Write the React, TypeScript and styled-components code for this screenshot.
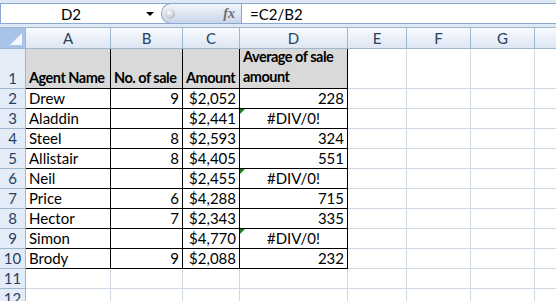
import styled, { createGlobalStyle } from "styled-components";

const GlobalStyle = createGlobalStyle`
    body {
        margin: 0;
        background: #ffffff;
        font-family: Lato, "Liberation Sans", sans-serif;
        overflow: hidden;
    }
`;

const Window = styled.div`
    width: 556px;
    height: 301px;
    overflow: hidden;
    background: #ffffff;
`;

const FormulaStrip = styled.div`
    background: #dfe8f5;
    padding-top: 3px;
    padding-bottom: 3px;
    border-bottom: 1px solid #9eb6ce;
`;

const FormulaBar = styled.div`
    display: flex;
    height: 19px;
    border: 1px solid #8ba8cf;
    border-right: none;
    background: #ffffff;
`;

const NameBox = styled.div`
    width: 160px;
    display: flex;
    align-items: center;
    font-size: 15px;
    color: #000;
`;

const NameText = styled.span`
    width: 140px;
    text-align: center;
`;

const DropArrow = styled.span`
    width: 0;
    height: 0;
    border-left: 4px solid transparent;
    border-right: 4px solid transparent;
    border-top: 4px solid #000;
    margin-left: 5px;
`;

const FxButton = styled.div`
    width: 80px;
    display: flex;
    align-items: center;
    justify-content: space-between;
    padding: 0 6px 0 3px;
    box-sizing: border-box;
    border-radius: 10px 0 0 10px;
    border: 1px solid #8ba8cf;
    border-right: none;
    margin: -1px 0;
    background: linear-gradient(#f3f6fb, #dbe4f2 55%, #c9d6ea);
`;

const Knob = styled.span`
    width: 10px;
    height: 10px;
    border-radius: 50%;
    background: radial-gradient(circle at 40% 35%, #ffffff, #c5c9cf 60%, #9aa1aa);
`;

const FxLabel = styled.span`
    font-family: "Liberation Serif", serif;
    font-style: italic;
    font-weight: bold;
    font-size: 14px;
    color: #6e6e6e;
`;

const FormulaInput = styled.div`
    flex: 1;
    border-left: 1px solid #8ba8cf;
    padding-left: 8px;
    display: flex;
    align-items: center;
    font-size: 15px;
    color: #000;
`;

const Grid = styled.div`
    display: grid;
    grid-template-columns: 26px 85px 72px 57px 108px 59px 64px 64px 64px;
    grid-template-rows: 21px 40px repeat(11, 20px);
`;

const Corner = styled.div`
    position: relative;
    background: #a9c4e9;
    border-right: 1px solid #9eb6ce;
    border-bottom: 1px solid #9eb6ce;
    &::after {
        content: "";
        position: absolute;
        right: 3px;
        bottom: 3px;
        width: 0;
        height: 0;
        border-left: 12px solid transparent;
        border-bottom: 12px solid #f4f7fb;
    }
`;

const ColHead = styled.div`
    display: flex;
    align-items: center;
    justify-content: center;
    background: linear-gradient(#f9fbfd, #e9eff8 55%, #dde6f3);
    border-right: 1px solid #9eb6ce;
    border-bottom: 1px solid #9eb6ce;
    font-size: 15px;
    color: #27415f;
`;

const RowHead = styled.div`
    display: flex;
    align-items: flex-end;
    justify-content: center;
    padding-bottom: 1px;
    background: #e4ecf7;
    border-right: 1px solid #9eb6ce;
    border-bottom: 1px solid #9eb6ce;
    font-size: 15px;
    line-height: 18px;
    color: #27415f;
`;

const Cell = styled.div<{ $align?: string; $boxed?: boolean; $head?: boolean; $flag?: boolean }>`
    position: relative;
    display: flex;
    align-items: flex-end;
    justify-content: ${(p) => p.$align || "flex-start"};
    padding: 0 3px 1px 3px;
    box-sizing: border-box;
    overflow: hidden;
    white-space: nowrap;
    background: ${(p) => (p.$head ? "#d9d9d9" : "#ffffff")};
    border-right: 1px solid ${(p) => (p.$boxed ? "#000" : "#d0d7e5")};
    border-bottom: 1px solid ${(p) => (p.$boxed ? "#000" : "#d0d7e5")};
    font-size: ${(p) => (p.$head ? "14.5px" : "15px")};
    letter-spacing: ${(p) => (p.$head ? "-0.5px" : "0")};
    line-height: 18px;
    font-weight: ${(p) => (p.$head ? "bold" : "normal")};
    color: #000;
    &::before {
        content: "";
        display: ${(p) => (p.$flag ? "block" : "none")};
        position: absolute;
        left: 0;
        top: 0;
        border-top: 5px solid #1e7b1e;
        border-right: 5px solid transparent;
    }
`;

const Wrapped = styled.span`
    white-space: normal;
    line-height: 20px;
`;

// H is only partly on screen, its letter falls past the window edge
const columns = ["A", "B", "C", "D", "E", "F", "G", ""];

interface IRow {
    name: string;
    sales: number | null;
    amount: string;
    avg: string;
}

const rows: IRow[] = [
    { name: "Drew", sales: 9, amount: "$2,052", avg: "228" },
    { name: "Aladdin", sales: null, amount: "$2,441", avg: "#DIV/0!" },
    { name: "Steel", sales: 8, amount: "$2,593", avg: "324" },
    { name: "Allistair", sales: 8, amount: "$4,405", avg: "551" },
    { name: "Neil", sales: null, amount: "$2,455", avg: "#DIV/0!" },
    { name: "Price", sales: 6, amount: "$4,288", avg: "715" },
    { name: "Hector", sales: 7, amount: "$2,343", avg: "335" },
    { name: "Simon", sales: null, amount: "$4,770", avg: "#DIV/0!" },
    { name: "Brody", sales: 9, amount: "$2,088", avg: "232" },
];

function Blanks() {
    return (
        <>
            {[4, 5, 6, 7].map((c) => (
                <Cell key={c} />
            ))}
        </>
    );
}

function App() {
    return (
        <Window>
            <GlobalStyle />
            <FormulaStrip>
                <FormulaBar>
                    <NameBox>
                        <NameText>D2</NameText>
                        <DropArrow />
                    </NameBox>
                    <FxButton>
                        <Knob />
                        <FxLabel>fx</FxLabel>
                    </FxButton>
                    <FormulaInput>=C2/B2</FormulaInput>
                </FormulaBar>
            </FormulaStrip>
            <Grid>
                <Corner />
                {columns.map((c, i) => (
                    <ColHead key={i}>{c}</ColHead>
                ))}

                <RowHead>1</RowHead>
                <Cell $boxed $head>Agent Name</Cell>
                <Cell $boxed $head>No. of sale</Cell>
                <Cell $boxed $head>Amount</Cell>
                <Cell $boxed $head>
                    <Wrapped>Average of sale amount</Wrapped>
                </Cell>
                <Blanks />

                {rows.map((r, i) => {
                    const isError = r.avg.startsWith("#");
                    return [
                        <RowHead key={`h${i}`}>{i + 2}</RowHead>,
                        <Cell key={`a${i}`} $boxed>{r.name}</Cell>,
                        <Cell key={`b${i}`} $boxed $align="flex-end">{r.sales ?? ""}</Cell>,
                        <Cell key={`c${i}`} $boxed $align="flex-end">{r.amount}</Cell>,
                        <Cell key={`d${i}`} $boxed $flag={isError} $align={isError ? "center" : "flex-end"}>
                            {r.avg}
                        </Cell>,
                        <Blanks key={`e${i}`} />,
                    ];
                })}

                {[11, 12].map((n) => [
                    <RowHead key={`h${n}`}>{n}</RowHead>,
                    ...columns.map((_, i) => <Cell key={`${i}-${n}`} />),
                ])}
            </Grid>
        </Window>
    );
}

export default App;
